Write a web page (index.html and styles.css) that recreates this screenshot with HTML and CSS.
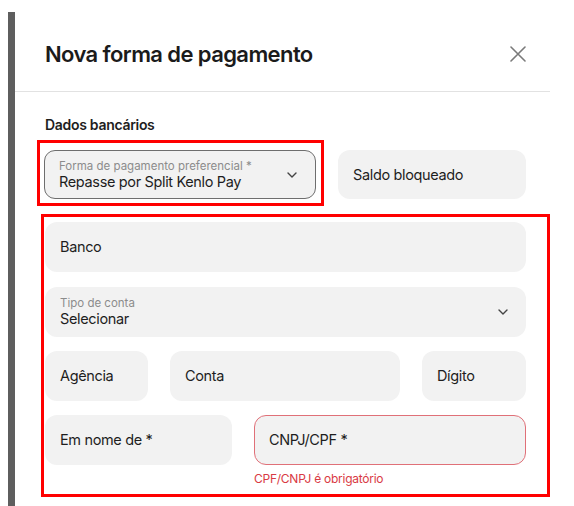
FILE: index.html
```html
<!DOCTYPE html>
<html lang="pt-BR">
<head>
<meta charset="utf-8">
<title>Nova forma de pagamento</title>
<link rel="stylesheet" href="styles.css">
</head>
<body>
<div class="page">
  <div class="backdrop"><div class="shade"></div></div>
  <div class="modal">
    <header class="modal-header">
      <h1 class="modal-title">Nova forma de pagamento</h1>
      <button class="close" aria-label="Fechar">
        <svg width="16" height="16" viewBox="0 0 16 16"><path d="M1 1L15 15M15 1L1 15" stroke="#7a7a7a" stroke-width="1.6" stroke-linecap="round" fill="none"/></svg>
      </button>
    </header>
    <div class="modal-body">
      <h2 class="section-title">Dados bancários</h2>
      <div class="top-row">
        <div class="mark mark-select">
          <div class="field select outlined">
            <div class="field-stack">
              <span class="field-label">Forma de pagamento preferencial *</span>
              <span class="field-value">Repasse por Split Kenlo Pay</span>
            </div>
            <svg class="chevron" width="10" height="6" viewBox="0 0 10 6"><path d="M1 1L5 5L9 1" stroke="#444" stroke-width="1.4" fill="none" stroke-linecap="round" stroke-linejoin="round"/></svg>
          </div>
        </div>
        <div class="field saldo"><span class="field-value">Saldo bloqueado</span></div>
      </div>
      <div class="mark mark-bank">
        <div class="field first"><span class="field-value">Banco</span></div>
        <div class="field select">
          <div class="field-stack">
            <span class="field-label">Tipo de conta</span>
            <span class="field-value">Selecionar</span>
          </div>
          <svg class="chevron" width="10" height="6" viewBox="0 0 10 6"><path d="M1 1L5 5L9 1" stroke="#444" stroke-width="1.4" fill="none" stroke-linecap="round" stroke-linejoin="round"/></svg>
        </div>
        <div class="grid-account">
          <div class="field"><span class="field-value">Agência</span></div>
          <div class="field"><span class="field-value">Conta</span></div>
          <div class="field"><span class="field-value">Dígito</span></div>
        </div>
        <div class="grid-owner">
          <div class="field"><span class="field-value">Em nome de *</span></div>
          <div class="doc">
            <div class="field error"><span class="field-value">CNPJ/CPF *</span></div>
            <div class="error-text">CPF/CNPJ é obrigatório</div>
          </div>
        </div>
      </div>
    </div>
  </div>
</div>
</body>
</html>
```
FILE: styles.css
```css
* { box-sizing: border-box; }
html, body { margin: 0; padding: 0; background: #fff; }
body {
  font-family: Inter, "Noto Sans", "Liberation Sans", sans-serif;
  color: #1e1e1e;
  width: 574px;
  height: 506px;
  overflow: hidden;
}
.page { display: flex; height: 506px; }
.backdrop { width: 15px; flex: none; padding: 12px 0 0 8px; }
.shade { width: 7px; height: 100%; background: #5e5e5e; }
.modal { width: 535px; flex: none; background: #fff; }
.modal-header {
  height: 92px;
  padding: 16px 24px 0 30px;
  display: flex;
  align-items: center;
  justify-content: space-between;
  border-bottom: 1px solid #e2e2e2;
}
.modal-title {
  margin: 0;
  font-size: 22px;
  font-weight: 600;
  letter-spacing: -0.6px;
  color: #1b1b1b;
}
.close {
  border: 0; background: none; padding: 0; margin: 0;
  width: 16px; height: 16px; display: flex;
}
.modal-body { padding: 0 24px 0 30px; }
.section-title {
  margin: 23px 0 5px;
  font-size: 14px;
  line-height: 20px;
  font-weight: 600;
  letter-spacing: -0.3px;
  color: #1e1e1e;
}
.top-row { display: flex; align-items: flex-start; margin-left: -8px; gap: 14px; }
.mark { border: 3px solid #ff0000; }
.mark-select { padding: 7px 5px 4px 4px; }
.field {
  height: 50px;
  background: #f2f2f2;
  border-radius: 12px;
  display: flex;
  align-items: center;
  padding: 0 15px;
  font-size: 14.5px;
}
.select { justify-content: space-between; padding-right: 18px; }
.outlined { width: 272px; height: 49px; border: 1px solid #6e6e6e; border-radius: 11px; padding-left: 14px; }
.saldo { width: 188px; height: 49px; margin-top: 10px; }
.field-stack { display: flex; flex-direction: column; }
.field-label { font-size: 11.5px; line-height: 14px; color: #8c8c8c; }
.field-value { font-size: 14.5px; line-height: 18px; letter-spacing: -0.35px; color: #1e1e1e; }
.mark-bank {
  margin: 8px 0 0 -4px;
  width: 509px;
  padding: 5px 21px 0 1px;
  height: 283px;
  display: flex;
  flex-direction: column;
  gap: 14px;
}
.first { margin-bottom: 1px; }
.grid-account { display: grid; grid-template-columns: 103px 1fr 104px; gap: 22px; }
.grid-owner { display: grid; grid-template-columns: 187px 1fr; gap: 22px; }
.error { border: 1px solid #e07078; padding-left: 14px; }
.error-text { margin-top: 6px; font-size: 12px; line-height: 16px; letter-spacing: -0.25px; color: #d93a44; }
```
